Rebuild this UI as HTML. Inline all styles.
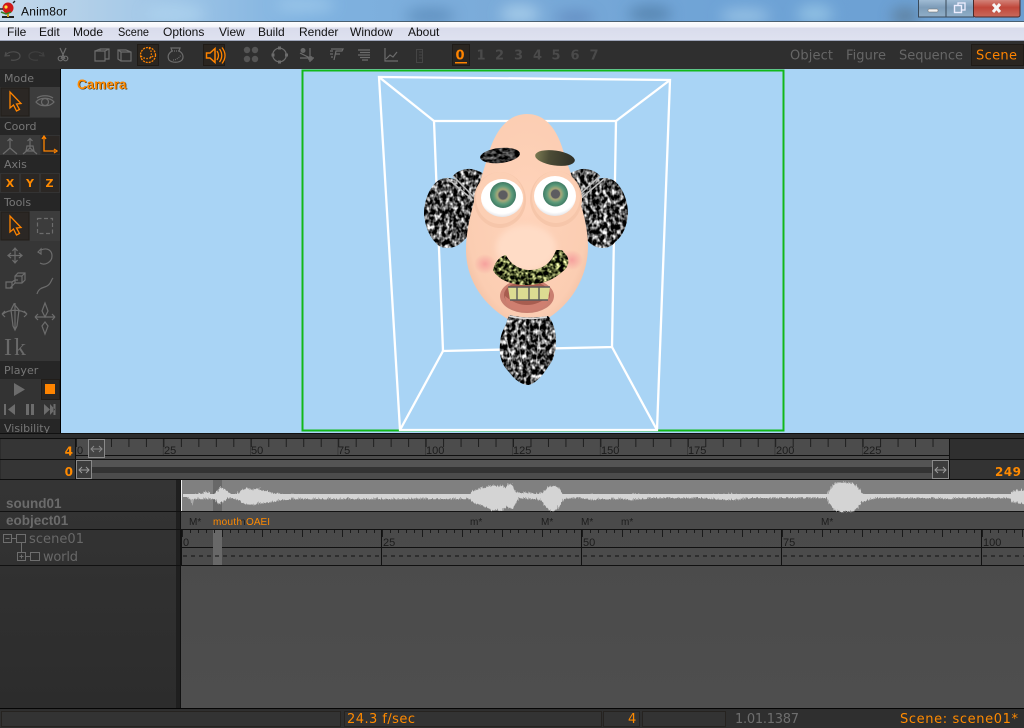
<!DOCTYPE html>
<html><head><meta charset="utf-8"><title>Anim8or</title>
<style>
html,body{margin:0;padding:0;width:1024px;height:728px;overflow:hidden;background:#333}
svg{display:block;position:absolute;left:0;top:0}
text{font-family:"Liberation Sans",sans-serif}
.m{font-size:12px;fill:#111}
.l{font-size:11px;fill:#777;font-family:"DejaVu Sans",sans-serif}
.t{font-size:13px;fill:#666;font-family:"DejaVu Sans",sans-serif}
.d{font-size:13px;font-weight:bold;fill:#4a4a4a;font-family:"DejaVu Sans",sans-serif}
.r{font-size:11px;fill:#1c1c1c}
.k{font-size:10px;fill:#1c1c1c}
.o{fill:#ff8a00}
.i{fill:none;stroke:#6c6c6c;stroke-width:1.2}
.a{fill:none;stroke:#ff8400;stroke-width:1.3}
.n{font-size:13.500px;font-weight:bold;fill:#6b6b6b}
.s{font-size:13px;fill:#ff8a00;font-family:"DejaVu Sans",sans-serif}
</style></head><body>
<svg width="1024" height="728" viewBox="0 0 1024 728" xmlns="http://www.w3.org/2000/svg">
<defs>
<linearGradient id="tb" x1="0" x2="1" y1="0" y2="0">
<stop offset="0" stop-color="#c4d8ea"/><stop offset=".12" stop-color="#a9cbe8"/><stop offset=".3" stop-color="#7fb2e0"/><stop offset=".5" stop-color="#7aaad8"/><stop offset=".7" stop-color="#6fa3d6"/><stop offset="1" stop-color="#6b9fd2"/></linearGradient>
<linearGradient id="mn" x1="0" x2="0" y1="0" y2="1"><stop offset="0" stop-color="#ffffff"/><stop offset=".3" stop-color="#f4f5fa"/><stop offset=".35" stop-color="#d9dcec"/><stop offset="1" stop-color="#dfe2f0"/></linearGradient>
<linearGradient id="cl" x1="0" x2="0" y1="0" y2="1"><stop offset="0" stop-color="#d8938a"/><stop offset=".5" stop-color="#c0473a"/><stop offset="1" stop-color="#c86a5c"/></linearGradient>
<linearGradient id="mx" x1="0" x2="0" y1="0" y2="1"><stop offset="0" stop-color="#a9c4dc"/><stop offset=".5" stop-color="#7d9cb8"/><stop offset="1" stop-color="#90aec8"/></linearGradient>
<linearGradient id="pn" x1="0" x2="0" y1="0" y2="1"><stop offset="0" stop-color="#343434"/><stop offset="1" stop-color="#2c2c2c"/></linearGradient>
<linearGradient id="bg" x1="0" x2="0" y1="0" y2="1"><stop offset="0" stop-color="#4a4a4a"/><stop offset="1" stop-color="#4e4e4e"/></linearGradient>
<linearGradient id="bw" x1="0" x2="1" y1="0" y2="0"><stop offset="0" stop-color="#7a7a52"/><stop offset=".35" stop-color="#4c4c36"/><stop offset="1" stop-color="#2e2e26"/></linearGradient>
<radialGradient id="skin" cx=".5" cy=".45" r=".62"><stop offset="0" stop-color="#ffd3ba"/><stop offset=".8" stop-color="#fbcdb2"/><stop offset="1" stop-color="#efbc9f"/></radialGradient>
<radialGradient id="irisL" cx=".5" cy=".5" r=".5"><stop offset="0" stop-color="#5c5c5c"/><stop offset=".3" stop-color="#73736a"/><stop offset=".45" stop-color="#a8a878"/><stop offset=".7" stop-color="#5c9a7a"/><stop offset="1" stop-color="#3f7a64"/></radialGradient>
<radialGradient id="wht" cx=".5" cy=".4" r=".6"><stop offset="0" stop-color="#fff"/><stop offset=".85" stop-color="#fff"/><stop offset="1" stop-color="#e4e4e8"/></radialGradient>
<radialGradient id="chk"><stop offset="0" stop-color="#f59a9a" stop-opacity=".85"/><stop offset="1" stop-color="#f59a9a" stop-opacity="0"/></radialGradient>
<filter id="blur4" x="-30%" y="-100%" width="160%" height="300%"><feGaussianBlur stdDeviation="7"/></filter>
<filter id="soft" x="-30%" y="-30%" width="160%" height="160%"><feGaussianBlur stdDeviation="3"/></filter>
<filter id="hair" x="-5%" y="-5%" width="110%" height="110%" color-interpolation-filters="sRGB">
<feTurbulence type="fractalNoise" baseFrequency=".26 .2" numOctaves="2" seed="4" result="n"/>
<feColorMatrix in="n" type="matrix" values="2.800 0 0 0 -1.100  2.800 0 0 0 -1.100  2.800 0 0 0 -1.100  0 0 0 0 1" result="c"/>
<feComposite in="c" in2="SourceAlpha" operator="in"/>
</filter>
<filter id="must" x="-5%" y="-5%" width="110%" height="110%" color-interpolation-filters="sRGB">
<feTurbulence type="fractalNoise" baseFrequency=".25 .25" numOctaves="2" seed="8" result="n"/>
<feColorMatrix in="n" type="matrix" values="2.500 0 0 0 -.95  2.500 0 0 0 -.92  1.800 0 0 0 -.72  0 0 0 0 1" result="c"/>
<feComposite in="c" in2="SourceAlpha" operator="in"/>
</filter>
<filter id="brow" x="-5%" y="-5%" width="110%" height="110%" color-interpolation-filters="sRGB">
<feTurbulence type="fractalNoise" baseFrequency=".2 .35" numOctaves="2" seed="2" result="n"/>
<feColorMatrix in="n" type="matrix" values="1.200 0 0 0 -.42  1.200 0 0 0 -.42  1.200 0 0 0 -.42  0 0 0 0 1" result="c"/>
<feComposite in="c" in2="SourceAlpha" operator="in"/>
</filter>
<filter id="jag" x="-1%" y="-20%" width="102%" height="140%" color-interpolation-filters="sRGB">
<feTurbulence type="turbulence" baseFrequency=".8 .01" numOctaves="1" seed="3" result="n"/>
<feDisplacementMap in="SourceGraphic" in2="n" scale="5" xChannelSelector="A" yChannelSelector="R"/>
</filter>
<pattern id="t1" x="76" y="439" width="17.48" height="20" patternUnits="userSpaceOnUse"><rect width="1" height="8" fill="#1e1e1e"/></pattern>
<pattern id="t1b" x="76" y="439" width="87.4" height="20" patternUnits="userSpaceOnUse"><rect x="87" width="1" height="16" fill="#1e1e1e"/></pattern>
<pattern id="t2" x="182" y="530" width="8" height="20" patternUnits="userSpaceOnUse"><rect width="1" height="3" fill="#1a1a1a"/></pattern>
<pattern id="t2m" x="182" y="530" width="40" height="20" patternUnits="userSpaceOnUse"><rect width="1" height="7" fill="#1a1a1a"/></pattern>
</defs>

<!-- title bar -->
<rect width="1024" height="21" fill="url(#tb)"/>
<g filter="url(#blur4)" opacity=".6">
<ellipse cx="175" cy="14" rx="30" ry="10" fill="#b4d8f2"/>
<ellipse cx="305" cy="5" rx="30" ry="8" fill="#a9d0ee"/>
<ellipse cx="430" cy="16" rx="25" ry="8" fill="#4f7fae"/>
<ellipse cx="520" cy="14" rx="20" ry="9" fill="#c0e0f4"/>
<ellipse cx="575" cy="18" rx="20" ry="6" fill="#5578b0"/>
<ellipse cx="650" cy="14" rx="22" ry="8" fill="#456f96"/>
<ellipse cx="745" cy="16" rx="25" ry="7" fill="#b4d8f0"/>
<ellipse cx="815" cy="14" rx="18" ry="9" fill="#a9d6ee"/>
<ellipse cx="905" cy="16" rx="14" ry="8" fill="#556a7a"/>
</g>
<!-- app icon -->
<path d="M2 16h12v2H2z" fill="#222"/>
<path d="M8 11v6" stroke="#c8a020" stroke-width="2"/>
<circle cx="8" cy="8" r="5.500" fill="#d01818"/>
<circle cx="6" cy="7" r="1.600" fill="#ffe040"/>
<path d="M0 9h3M13 3l2-2" stroke="#222" stroke-width="1.400"/>
<path d="M1 12l5 2 5-2" stroke="#3a7a20" stroke-width="1.500" fill="none"/>
<text x="21" y="15.500" font-size="12" fill="#0a0a0a" textLength="46">Anim8or</text>
<!-- window buttons -->
<rect x="918.500" y="-2" width="27.500" height="19" fill="url(#mx)" stroke="#3a4a5a"/>
<rect x="946" y="-2" width="27.500" height="19" fill="url(#mx)" stroke="#3a4a5a"/>
<rect x="973.500" y="-2" width="46.500" height="19" rx="2" fill="url(#cl)" stroke="#4a2a2a"/>
<rect x="928" y="9" width="10" height="3" rx="1" fill="#f4f4f4" stroke="#666" stroke-width=".5"/>
<rect x="958" y="3" width="7" height="7" fill="none" stroke="#eef" stroke-width="1.300"/>
<rect x="954.500" y="5.500" width="7" height="7" fill="#8fabc4" stroke="#eef" stroke-width="1.400"/>
<path d="M993 4l7 8M1000 4l-7 8" stroke="#f6f6f6" stroke-width="3"/>

<!-- menu -->
<rect y="21" width="1024" height="20" fill="url(#mn)"/>
<rect y="21" width="1024" height="1" fill="#4a6070"/>
<rect y="40" width="1024" height="1" fill="#9fa6ba"/>
<text class="m" x="7" y="36">File</text>
<text class="m" x="39" y="36">Edit</text>
<text class="m" x="73" y="36">Mode</text>
<text class="m" x="118" y="36" textLength="31" lengthAdjust="spacingAndGlyphs">Scene</text>
<text class="m" x="163" y="36">Options</text>
<text class="m" x="219" y="36">View</text>
<text class="m" x="258" y="36">Build</text>
<text class="m" x="299" y="36">Render</text>
<text class="m" x="350" y="36">Window</text>
<text class="m" x="408" y="36">About</text>

<!-- toolbar -->
<rect y="41" width="1024" height="28" fill="#2f2f2f"/>
<rect x="137.500" y="44.500" width="21" height="21" fill="#2a2520" stroke="#1f1b17"/>
<rect x="203.500" y="44.500" width="21" height="21" fill="#2a2520" stroke="#1f1b17"/>
<rect x="452.500" y="44.500" width="17" height="21" fill="#2a2520" stroke="#1f1b17"/>
<rect x="971.500" y="44.500" width="52" height="21" fill="#2a2520" stroke="#1f1b17"/>
<!-- undo/redo/scissors -->
<path class="i" style="stroke:#4e4e4e" d="M6 52l-1 4 5-.5M5.500 55.500C9 50 20 51 20 56c0 3-4 5-9 4"/>
<path class="i" style="stroke:#3f3f3f" d="M43 52l1 4-5-.5M43.500 55.500C40 50 29 51 29 56c0 3 4 5 9 4"/>
<path class="i" d="M60 48l5 11M66 48l-5 11"/><circle class="i" cx="60.500" cy="58.500" r="2.300"/><circle class="i" cx="65.500" cy="58.500" r="2.300"/>
<!-- cubes -->
<path class="i" d="M95 51h10v10H95zM100 49h9v10h-4M95 51l5-2M105 51l4-2M100 49v2"/>
<path class="i" d="M118 50h8l5 2v9h-10l-3-2zM121 52h10M121 52v9M118 50l3 2"/>
<!-- sphere -->
<circle class="a" cx="148" cy="55" r="7.500" stroke-dasharray="2 1"/>
<path class="a" d="M141 56c4 4 10 3 13-1M149 48c3 3 3 7 1 11" stroke-dasharray="1.500 1.500"/>
<!-- pot -->
<path class="i" d="M171 48h9l-1 3c4 2 5 6 3 9-3 3-10 3-13 0-2-4 0-7 3-9z"/><path class="i" stroke-dasharray="1 1" d="M173 60c3 0 6-2 8-5M172 51h7"/>
<!-- speaker -->
<path d="M206.500 53h3.500l5-4.500v14L210 58h-3.500z" fill="none" stroke="#ff8400" stroke-width="1.500"/>
<path d="M217 51c2 3 2 6 0 9M219.500 49c3 4 3 9 0 13M222 47.500c4 5 4 11 0 16" fill="none" stroke="#ff8400" stroke-width="1.300"/>
<!-- dots -->
<g fill="#555"><circle cx="247" cy="50" r="3.200"/><circle cx="255" cy="50" r="3.200"/><circle cx="247" cy="59" r="3.200"/><circle cx="255" cy="59" r="3.200"/></g>
<!-- circle w pts -->
<circle class="i" cx="279.500" cy="55" r="6.800"/>
<g fill="#6c6c6c"><rect x="278" y="46.500" width="3" height="3"/><rect x="278" y="60.500" width="3" height="3"/><rect x="271.500" y="53.500" width="3" height="3"/><rect x="285" y="53.500" width="3" height="3"/></g>
<!-- bone -->
<circle cx="303" cy="50.500" r="2.500" fill="#666"/><path class="i" d="M300 53l12 6M310 48v14M300 58h14"/><circle cx="310.500" cy="58.500" r="2.500" fill="#666"/>
<!-- F -->
<path class="i" d="M331 49h12l-1 2h-6l-2 9M335 54h5M330 51h3M330 54h3M331 57h2"/>
<!-- list -->
<path class="i" d="M358 50h12M360 52.500h10M358 55h12M360 57.500h10M362 60h6" stroke-width="1"/>
<!-- graph -->
<path class="i" d="M385 48v13h13M386 59l4-4 3 2 4-5"/>
<!-- ruler -->
<path style="fill:none;stroke:#454545" d="M416.500 49.500h6v13h-6zM419 52h3M419 55h3M419 58h3"/>
<!-- digits -->
<text class="d" x="455.500" y="59.500" style="fill:#ff8400">0</text><rect x="455" y="62" width="12" height="1.500" fill="#ff8400"/>
<text class="d" x="476.500" y="59.500">1</text>
<text class="d" x="495" y="59.500">2</text>
<text class="d" x="514" y="59.500">3</text>
<text class="d" x="533" y="59.500">4</text>
<text class="d" x="551.500" y="59.500">5</text>
<text class="d" x="570.500" y="59.500">6</text>
<text class="d" x="589.500" y="59.500">7</text>
<text class="t" x="790" y="59.500" textLength="43">Object</text>
<text class="t" x="846" y="59.500" textLength="40">Figure</text>
<text class="t" x="899" y="59.500" textLength="64">Sequence</text>
<text class="t" x="976" y="59.500" textLength="41" style="fill:#ff8400">Scene</text>

<!-- viewport -->
<rect x="61" y="69" width="963" height="364" fill="#a9d4f5"/>
<rect x="302.500" y="70.500" width="481" height="360" fill="none" stroke="#12b81a" stroke-width="2"/>
<text x="77.700" y="89.600" font-size="13.500" font-weight="bold" fill="#4a3210">Camera</text>
<text x="77" y="89" font-size="13.500" font-weight="bold" fill="#ff8a00">Camera</text>
<!-- wireframe -->
<g fill="none" stroke="#fff" stroke-width="2.300">
<path d="M379 77L670 80L657 430L400 430Z"/>
<path d="M434 121H616L612 347L443 351Z"/>
<path d="M379 77L434 121M670 80L616 121M443 351L400 430M612 347L657 430"/>
</g>

<!-- hair -->
<g filter="url(#hair)">
<path d="M447 178c14 0 26 10 30 22l-6 30c-6 12-14 18-24 18-6 0-10-3-12-6-6-6-10-16-11-28 0-10 3-20 8-27 4-6 9-9 15-9z"/>
<path d="M453 176c4-6 16-9 22-6 8 2 12 6 14 12l-10 30c-6-14-14-28-26-36z"/>
<path d="M605 178c-14 0-26 10-30 22l6 30c6 12 12 18 22 18 6 0 10-3 12-6 8-6 12-16 13-28 0-10-3-20-8-27-4-6-9-9-15-9z"/>
<path d="M600 176c-4-6-16-9-22-6-8 2-12 6-14 12l10 30c6-14 14-28 26-36z"/>
</g>
<path d="M447 178l26 22M605 178l-26 22M453 176l20 20M600 176l-22 20" stroke="#bdbdbd" stroke-width="1.500" fill="none"/>

<!-- head -->
<path d="M527 114C508 114 496 130 489 152C480 185 466 218 466 250C466 285 490 315 527 328C565 316 588 282 588 246C588 216 573 182 563 150C557 130 546 114 527 114Z" fill="url(#skin)"/>
<!-- sockets -->
<ellipse cx="500" cy="200" rx="26" ry="28" fill="#f6c6aa"/>
<ellipse cx="556" cy="199" rx="26" ry="28" fill="#f6c6aa"/>
<ellipse cx="500" cy="198" rx="24" ry="26" fill="#fccfb4"/>
<ellipse cx="556" cy="197" rx="24" ry="26" fill="#fccfb4"/>
<!-- eyes -->
<ellipse cx="502" cy="198" rx="21" ry="19" fill="url(#wht)"/>
<ellipse cx="555" cy="196" rx="21" ry="20" fill="url(#wht)"/>
<circle cx="503" cy="195" r="13" fill="url(#irisL)"/>
<circle cx="555.500" cy="194" r="12.500" fill="url(#irisL)"/>
<circle cx="503" cy="195" r="4.500" fill="#5c5c60"/>
<circle cx="555.500" cy="194" r="4.500" fill="#5c5c60"/>
<!-- brows -->
<g filter="url(#brow)"><ellipse cx="500" cy="155.500" rx="20" ry="7.500" transform="rotate(-6 500 155)"/></g>
<ellipse cx="555" cy="158" rx="20" ry="7.500" transform="rotate(8 555 158)" fill="url(#bw)"/>
<!-- cheeks -->
<ellipse cx="485" cy="264" rx="11" ry="10" fill="url(#chk)"/>
<ellipse cx="572" cy="260" rx="11" ry="10" fill="url(#chk)"/>
<!-- nose -->
<ellipse cx="526" cy="248" rx="30" ry="23" fill="#ffdcc6" filter="url(#soft)"/>
<!-- mouth -->
<ellipse cx="527" cy="296" rx="27" ry="17" fill="#c97f70"/>
<ellipse cx="527" cy="295" rx="23" ry="14" fill="#a85d50"/>
<path d="M505 296c14 12 30 12 44 0 0 6-4 11-9 13-8 3-18 3-26 0-5-2-9-7-9-13z" fill="#cf7f70"/>
<path d="M508 287h42l-2 13h-38z" fill="#dcdc92"/>
<path d="M508 287h42M517 287v13M529 287v13M539 287v13M510 300h38" stroke="#5a5a5a" stroke-width="1.400" fill="none"/>
<!-- moustache -->
<path filter="url(#must)" d="M493 270C495 262 500 256 506 255C510 264 520 270 530 270C543 270 552 262 556 250L562 250L567 256C570 262 568 268 562 272C552 281 540 285 525 285C512 285 498 280 493 270Z"/>
<!-- beard -->
<path filter="url(#hair)" d="M510 315c12 3 25 3 38 1 5 5 8 15 8 25 0 12-3 20-8 26-5 8-12 16-19 18-8 0-15-6-20-13-8-8-10-17-9-28 0-8 3-14 6-20 1-4 2-7 4-9z"/>
<path d="M509 316c12 3 25 3 38 1" stroke="#ddd" stroke-width="1.500" fill="none"/>
<path d="M507 340l5 28M516 322l6 44M540 322l-4 44" stroke="#e4e4e4" stroke-width="1" opacity=".6" fill="none"/>

<!-- left panel -->
<rect x="0" y="69" width="60" height="365" fill="#333"/>
<rect x="60" y="69" width="1" height="365" fill="#000"/>
<g fill="#262626">
<rect y="69" width="60" height="18"/><rect y="118" width="60" height="17"/><rect y="155" width="60" height="18"/><rect y="193" width="60" height="18"/><rect y="361" width="60" height="18"/><rect y="419" width="60" height="15"/>
</g>
<text class="l" x="4" y="82">Mode</text>
<text class="l" x="4" y="130">Coord</text>
<text class="l" x="4" y="168">Axis</text>
<text class="l" x="4" y="206">Tools</text>
<text class="l" x="4" y="374">Player</text>
<text class="l" x="4" y="432">Visibility</text>
<!-- mode -->
<rect x="30" y="87" width="30" height="30" fill="#3c3c3c"/>
<rect x="1" y="88" width="28" height="28" fill="#2b2724" stroke="#211d19"/>
<path class="a" d="M10 92l0 16 3.500-3 3 6 3-1.500-3-5.500 4.500-.5z"/>
<path class="i" d="M36 102c4-5 14-5 18 0-4 5-14 5-18 0z"/><circle class="i" cx="45" cy="102" r="3.500"/><path class="i" d="M37 98c4-3 12-3 16 0"/>
<!-- coord -->
<rect x="0" y="135" width="40" height="20" fill="#3a3a3a"/>
<rect x="41.500" y="136" width="18" height="18" fill="#2b2724"/>
<path class="i" d="M10 139v9l-7 6M10 148l7 6M7.500 141l2.500-2.500 2.500 2.500"/>
<path class="i" d="M30 139v9l-7 6M30 148l7 6M27.500 141l2.500-2.500 2.500 2.500M27 146h6l1 5h-8z"/>
<path class="a" d="M44 136v15h11M42 139l2-3 2 3M54 149l3 2-3 2"/>
<!-- axis -->
<g fill="#2b2724"><rect x="1" y="174" width="18" height="18"/><rect x="21" y="174" width="18" height="18"/><rect x="41" y="174" width="18" height="18"/></g>
<g font-size="11" font-weight="bold" class="o" text-anchor="middle">
<text x="10" y="187" style="font-family:'DejaVu Sans',sans-serif">X</text><text x="30" y="187" style="font-family:'DejaVu Sans',sans-serif">Y</text><text x="49.500" y="187" style="font-family:'DejaVu Sans',sans-serif">Z</text></g>
<!-- tools -->
<rect x="0" y="211" width="60" height="150" fill="#3a3a3a" opacity=".5"/>
<rect x="30" y="211" width="30" height="30" fill="#3c3c3c"/>
<rect x="1" y="212" width="28" height="28" fill="#2b2724" stroke="#211d19"/>
<path class="a" d="M10 216l0 16 3.500-3 3 6 3-1.500-3-5.500 4.500-.5z"/>
<rect class="i" x="37.500" y="218.500" width="15" height="15" stroke-dasharray="4 2.500"/>
<path class="i" d="M15 248v15M7.500 255.500h15M12.500 251l2.500-3 2.500 3M12.500 260l2.500 3 2.500-3M11 253l-3 2.500 3 2.500M19 253l3 2.500-3 2.500" stroke-width="1.400"/>
<path class="i" d="M41 250c7-3 11 1 11 6 0 6-7 10-12 7M38 252l3-3v5z" stroke-width="1.300"/>
<!-- scale -->
<path class="i" d="M12 288l-6 0 0-6 6 0zM12 282l3-2h3M15 276l3-3h7v7l-3 3h-7z M15 276h7v7M22 276l3-3M10 288l5-5"/>
<path class="i" d="M37 294c2-7 7-6 10-8 4-2 4-6 6-8"/>
<!-- bone move -->
<path class="i" d="M14 304l-3 6 2 16 2 4 2-4 2-16zM3 314c6-5 18-5 24 0M2 314l3-3M2 314l3 3M27 314l-3-3M27 314l-3 3M15 303v27"/>
<path class="i" d="M45 303l-3 8 3 6 3-6zM45 322l-3 4 3 8 3-8zM35 317h20M35 317l3-3M35 317l3 3M55 317l-3-3M55 317l-3 3"/>
<text x="4" y="355" font-size="24" fill="#6a6a6a" style="font-family:'Liberation Serif',serif" textLength="22">Ik</text>
<!-- player -->
<rect x="41.500" y="379.500" width="18" height="20" fill="#2b2724" stroke="#211d19"/>
<rect x="45" y="384" width="10" height="10" fill="#ff8400"/>
<path d="M14 383l11 6.500-11 6.500z" fill="#6c6c6c"/>
<path d="M4 404h2v11H4zM15 404v11l-7-5.500zM8 404v11" fill="#6c6c6c"/>
<path d="M10 410l5-5.500v10z" fill="#6c6c6c"/>
<path d="M26 404h3v11h-3zM31 404h3v11h-3z" fill="#6c6c6c"/>
<path d="M44 404v11l6-5.500zM50 404v11l5-5.500zM53.500 404h2v11h-2z" fill="#6c6c6c"/>

<!-- timeline frame -->
<rect y="433" width="1024" height="47" fill="#2c2c2c"/>
<rect y="433" width="1024" height="1" fill="#111"/>
<!-- ruler 1 -->
<rect x="0" y="438" width="1024" height="1" fill="#0e0e0e"/>
<rect x="0" y="459" width="1024" height="1" fill="#0e0e0e"/>
<rect x="0" y="479" width="1024" height="1" fill="#0e0e0e"/>
<rect x="1" y="439" width="74" height="20" fill="#353535"/>
<rect x="1" y="460" width="74" height="19" fill="#353535"/>
<rect x="75" y="439" width="1" height="40" fill="#111"/>
<rect x="76" y="439" width="873" height="16" fill="#4c4c4c"/>
<rect x="76" y="455" width="873" height="1" fill="#111"/>
<rect x="76" y="456" width="873" height="3" fill="#4c4c4c"/>
<rect x="76" y="439" width="873" height="8" fill="url(#t1)"/>
<rect x="76" y="439" width="873" height="16" fill="url(#t1b)"/>
<rect x="949" y="439" width="75" height="40" fill="#2f2f2f"/>
<rect x="949" y="439" width="1" height="40" fill="#111"/>
<rect x="950" y="459" width="74" height="1" fill="#111"/>
<rect x="950" y="460" width="74" height="19" fill="#333"/>
<g class="r"><text class="r" x="77" y="454">0</text><text class="r" x="164" y="454">25</text><text class="r" x="251" y="454">50</text><text class="r" x="338" y="454">75</text><text class="r" x="426" y="454">100</text><text class="r" x="513" y="454">125</text><text class="r" x="601" y="454">150</text><text class="r" x="688" y="454">175</text><text class="r" x="776" y="454">200</text><text class="r" x="863" y="454">225</text></g>
<!-- handle 1 -->
<rect x="88.500" y="439.500" width="16" height="18" fill="#444" stroke="#8a8a8a"/>
<path d="M91 449h11M94 446l-3 3 3 3M99 446l3 3-3 3" fill="none" stroke="#8a8a8a"/>
<text x="73" y="455.500" text-anchor="end" font-size="12" font-weight="bold" class="o" style="font-family:'DejaVu Sans',sans-serif">4</text>
<!-- slider -->
<rect x="76" y="460" width="873" height="19" fill="#545454"/>
<rect x="76" y="467" width="873" height="6" fill="#333"/>
<rect x="76" y="473" width="873" height="6" fill="#4c4c4c"/>
<rect x="76.500" y="460.500" width="15" height="18" fill="#3c3c3c" stroke="#8a8a8a"/>
<rect x="932.500" y="460.500" width="16" height="18" fill="#3c3c3c" stroke="#8a8a8a"/>
<path d="M79 470h10M82 467l-3 3 3 3M86 467l3 3-3 3M935 470h11M938 467l-3 3 3 3M943 467l3 3-3 3" fill="none" stroke="#9a9a9a"/>
<text x="73" y="476" text-anchor="end" font-size="12" font-weight="bold" class="o" style="font-family:'DejaVu Sans',sans-serif">0</text>
<text x="995" y="476" font-size="12" font-weight="bold" class="o" style="font-family:'DejaVu Sans',sans-serif" textLength="26">249</text>

<!-- tracks -->
<rect x="0" y="480" width="176" height="228" fill="url(#pn)"/>
<rect x="176" y="480" width="4" height="228" fill="#1f1f1f"/>
<rect x="180" y="480" width="1" height="228" fill="#111"/>
<rect x="181" y="480" width="843" height="31" fill="#808080"/>
<rect x="181" y="480" width="1" height="31" fill="#eee"/>
<rect x="181" y="512" width="843" height="196" fill="url(#bg)"/>
<rect x="0" y="511" width="1024" height="1" fill="#111"/>
<rect x="0" y="529" width="1024" height="1" fill="#111"/>
<rect x="0" y="565" width="1024" height="1" fill="#111"/>
<rect x="181" y="547" width="843" height="1" fill="#111"/>
<rect x="213" y="480" width="9" height="31" fill="#686868"/>
<rect x="213" y="530" width="9" height="35" fill="#686868"/>
<!-- wave -->
<rect x="183" y="494" width="841" height="3" fill="#d4d4d4"/>
<path filter="url(#jag)" fill="#d4d4d4" d="M186 494H191V493H196V491L200 492L204 490L208 491V493H213V491L216 489L218 486L222 486L225 489L227 491L230 493H234L237 491L240 488L243 487L246 486L250 488L254 487L259 488L265 489L270 491L280 492L290 493L310 494H468L470 490L474 488L478 487L482 486L486 485L490 484L494 484L497 485L501 483L504 486L508 482L511 484L513 490L518 491L526 491L535 492L540 491L543 488L547 485L552 484L556 485L560 490L562 493L572 494H580L586 493L590 492L596 493L600 494H620L625 493L630 492L640 493L650 494H700L712 493L725 492L735 493L750 494H825L827 491L829 487L832 482L836 481L845 481L852 482L857 486L860 491L866 493L875 494H930L945 493L958 494H1008L1010 490L1014 489L1024 488V502L1014 501L1010 500L1008 496H958L945 497L930 496H875L866 498L860 500L856 506L852 509L848 510L840 510L834 509L830 505L827 500L825 496H750L735 498L725 498L712 497L700 496H650L640 497L630 498L620 497H600L590 498L580 496H572L562 497L560 500L556 507L552 509L548 509L544 505L540 499L535 497L526 497L518 496L514 500L511 507L505 505L500 509L495 508L490 509L484 505L478 503L472 501L468 497H310L290 497L280 498L270 500L262 501L250 503L243 502L237 498L230 496H226L222 499L218 502L215 500L213 497H191L190 505L189 497H186Z"/>
<!-- track labels -->
<text x="6" y="508" class="n">sound01</text>
<text x="6" y="525" class="n">eobject01</text>
<!-- markers -->
<g class="k" font-size="10">
<text class="k" x="189" y="525">M*</text>
<text class="k" x="470" y="525">m*</text>
<text class="k" x="541" y="525">M*</text>
<text class="k" x="581" y="525">M*</text>
<text class="k" x="621" y="525">m*</text>
<text class="k" x="821" y="525">M*</text>
</g>
<text x="240" y="525" font-size="10" fill="#1c1c1c">n</text>
<text x="213" y="525" font-size="10" class="o" textLength="29">mouth</text>
<text x="246" y="525" font-size="10" class="o" textLength="24">OAEI</text>
<!-- ruler 2 -->
<rect x="182" y="530" width="842" height="3" fill="url(#t2)"/>
<rect x="182" y="530" width="842" height="7" fill="url(#t2m)"/>
<path d="M381.500 530v35M581.500 530v35M781.500 530v35M981.500 530v35M181.500 530v35" stroke="#111" fill="none"/>
<path d="M183 556H1024" stroke="#111" stroke-dasharray="4 4" fill="none"/>
<g class="r"><text class="r" x="183" y="546">0</text><text class="r" x="383" y="546">25</text><text class="r" x="583" y="546">50</text><text class="r" x="783" y="546">75</text><text class="r" x="983" y="546">100</text></g>
<!-- tree -->
<g fill="none" stroke="#6e6e6e">
<rect x="3.500" y="534.500" width="8" height="8"/><path d="M5.500 538.500h4M11.500 538.500h5"/>
<rect x="16.500" y="534.500" width="9" height="8"/><path d="M21.500 542.500v10"/>
<rect x="17.500" y="552.500" width="8" height="8"/><path d="M19.500 556.500h4M21.500 554.500v4M25.500 556.500h5"/>
<rect x="30.500" y="552.500" width="9" height="8"/>
</g>
<text x="29" y="543" font-size="13" fill="#686868" textLength="55" style="font-family:'DejaVu Sans',sans-serif">scene01</text>
<text x="43" y="561" font-size="13" fill="#686868" textLength="35" style="font-family:'DejaVu Sans',sans-serif">world</text>

<!-- status -->
<rect y="708" width="1024" height="20" fill="#2f2f2f"/>
<rect y="708" width="1024" height="1" fill="#050505"/>
<g fill="#333" stroke="#262320">
<rect x="1.500" y="711.500" width="339" height="15"/>
<rect x="344.500" y="711.500" width="257" height="15"/>
<rect x="603.500" y="711.500" width="36" height="15"/>
<rect x="642.500" y="711.500" width="83" height="15"/>
</g>
<text x="347" y="723" class="s" textLength="68">24.3 f/sec</text>
<text x="628" y="723" class="s">4</text>
<text x="735" y="723" font-size="13" fill="#6e6e6e" textLength="64" style="font-family:'DejaVu Sans',sans-serif">1.01.1387</text>
<text x="900" y="723" class="s" textLength="118">Scene: scene01*</text>
</svg>
</body></html>
